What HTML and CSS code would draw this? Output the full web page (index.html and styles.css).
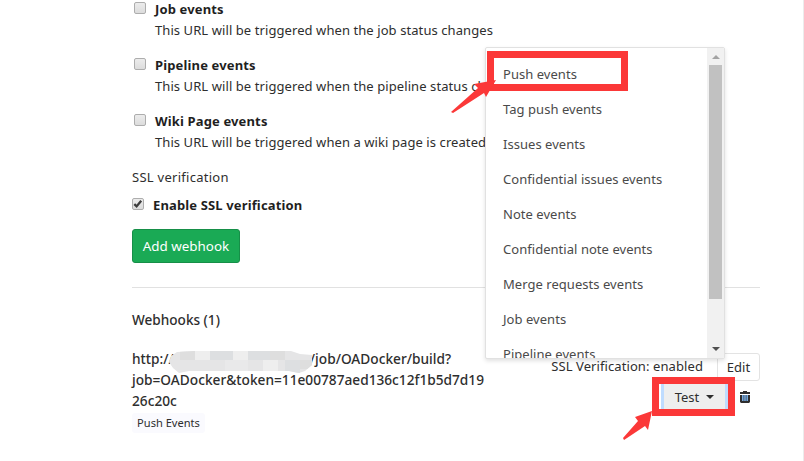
FILE: index.html
```html
<!DOCTYPE html>
<html lang="en">
<head>
<meta charset="utf-8">
<title>Webhooks</title>
<link rel="stylesheet" href="styles.css">
</head>
<body>
<main class="page">
  <section class="triggers">
    <div class="trigger"><span class="box"></span><div><div class="name">Job events</div><div class="desc">This URL will be triggered when the job status changes</div></div></div>
    <div class="trigger"><span class="box"></span><div><div class="name">Pipeline events</div><div class="desc">This URL will be triggered when the pipeline status changes</div></div></div>
    <div class="trigger"><span class="box"></span><div><div class="name">Wiki Page events</div><div class="desc">This URL will be triggered when a wiki page is created</div></div></div>
  </section>
  <div class="ssl-title">SSL verification</div>
  <div class="ssl-check">
    <span class="box"><svg width="12" height="12" viewBox="0 0 12 12"><path d="M2.3 6.2 4.6 8.4 9.2 2.8" fill="none" stroke="#3d3d3d" stroke-width="2.3"/></svg></span>
    <span class="name">Enable SSL verification</span>
  </div>
  <button class="add">Add webhook</button>
  <div class="rule"></div>
  <h5 class="heading">Webhooks (1)</h5>
  <div class="hook">
    <div class="hook-info">
      <div class="url">
        <div class="url-line"><span>http://</span><svg class="mask" width="144" height="22" viewBox="0 0 144 22">
          <clipPath id="blob"><path d="M8 1 26 0H122L131 3 143 4V14L136 20 130 22 120 20H20L10 22 4 17 0 11 2 5Z"/></clipPath>
          <g clip-path="url(#blob)"><path fill="#e5e5e6" d="M0 0h144v22H0z"/><path fill="#dedede" d="M11 0h15v9H11zM131 9h13v9h-13zM101 0h15v9h-15z"/><path fill="#eee" d="M26 0h15v9H26zM64 0h15v9H64zM94 9h15v13H94z"/><path fill="#dddfe1" d="M41 0h23v9H41zM79 0h22v9H79zM116 9h15v13h-15z"/><path fill="#e9e9ea" d="M56 9h23v13H56z"/></g>
        </svg><span class="url-end">/job/OADocker/build?</span></div>
        <div class="url-2">job=OADocker&amp;token=11e00787aed136c12f1b5d7d19</div>
        <div>26c20c</div>
      </div>
      <span class="badge">Push Events</span>
    </div>
    <div class="hook-actions">
      <div class="action-row"><span class="status">SSL Verification: enabled</span><button class="edit">Edit</button></div>
      <div class="action-row second">
        <button class="test"><span>Test</span><i class="caret"></i></button>
        <svg class="trash" width="10" height="12" viewBox="0 0 10 12"><path fill="#2e2e2e" fill-rule="evenodd" d="M3 0h4v1h3v2H0V1h3zM0 4h10v7l-1 1H1l-1-1z"/><path fill="#75a9df" d="M2 4h1.6v6H2zM4.2 4h1.6v6H4.2zM6.4 4H8v6H6.4z"/></svg>
      </div>
    </div>
  </div>
</main>
<div class="menu">
  <ul class="items">
    <li>Push events</li><li>Tag push events</li><li>Issues events</li><li>Confidential issues events</li><li>Note events</li><li>Confidential note events</li><li>Merge requests events</li><li>Job events</li><li>Pipeline events</li>
  </ul>
  <div class="scroll"><i class="up"></i><i class="thumb"></i><i class="down"></i></div>
</div>
<svg class="marks" width="804" height="461" viewBox="0 0 804 461">
  <g fill="none" stroke="#fb3838" stroke-width="7"><path d="M490.5 54.5h134v33h-134z"/><path d="M655.5 380.5h76v32h-76z"/></g>
  <path fill="#fb3838" d="M496 80 474 84 478 88 451 112 453 113 484 93 486 97ZM652 411 635 417 638 421 623 438 624 440 645 426 648 430Z"/>
</svg>
</body>
</html>
```
FILE: styles.css
```css
* { box-sizing: border-box; }
body { margin: 0; width: 804px; height: 461px; overflow: hidden; position: relative; background: #fff; color: #2e2e2e; font: 14px/21px "Noto Sans", sans-serif; }
button { font: inherit; margin: 0; }
.page { height: 461px; padding: 0 43px 0 132px; border-right: 1px solid #ececec; }
.trigger { display: flex; gap: 9px; height: 56px; }
.box { flex: none; width: 12px; height: 12px; border: 1px solid #adadad; border-radius: 2px; background: linear-gradient(#ececec, #dcdcdc); }
.box svg { display: block; margin: -1px; }
.trigger .box { margin: 2px 0 0 2px; }
.trigger > div { margin-top: -1px; }
.name { font-weight: 700; font-size: 13px; letter-spacing: .14px; color: #1f1f1f; white-space: nowrap; }
.desc { font-size: 13px; letter-spacing: .08px; white-space: nowrap; }
.ssl-title { margin-top: -1px; line-height: 21px; font-size: 13px; letter-spacing: .27px; }
.ssl-check { display: flex; gap: 9px; margin-top: 5px; height: 22px; }
.ssl-check .box { margin-top: 5px; }
.ssl-check .name { line-height: 24px; }
.add { display: block; width: 108px; height: 34px; margin-top: 14px; padding: 0; border: 1px solid #168f48; border-radius: 3px; background: #1aaa55; color: #fff; font-size: 13.4px; }
.rule { margin-top: 24px; height: 1px; background: #e1e1e1; }
.heading { margin: 21px 0 0; font-size: 13.6px; font-weight: 500; line-height: 21px; }
.hook { display: flex; justify-content: space-between; margin-top: 19px; }
.hook-info { width: 356px; }
.url { margin-top: -1px; font-size: 13.7px; font-weight: 500; white-space: nowrap; }
.url-line { display: flex; height: 21px; }
.mask { flex: none; margin: 3px -3px 0 -5px; position: relative; }
.badge { display: block; width: 73px; height: 20px; margin-top: 2px; border-radius: 3px; background: #fafafe; font-size: 11.1px; line-height: 20px; text-align: center; white-space: nowrap; }
.hook-actions { padding-top: 4px; }
.action-row { display: flex; justify-content: flex-end; white-space: nowrap; font-size: 13px; }
.status { line-height: 27px; margin-right: 14px; letter-spacing: .09px; }
.edit { width: 43px; height: 28px; padding: 0; border: 1px solid #e3e3e3; border-radius: 3px; background: #fff; color: #2e2e2e; }
.second { margin-top: 2px; padding-right: 10px; }
.test { display: flex; align-items: center; justify-content: center; gap: 7px; width: 67px; height: 28px; padding: 0; border: solid #bfdcff; border-width: 0 3px; background: #eee; color: #2e2e2e; }
.caret { width: 0; height: 0; border: 4px solid transparent; border-top-color: #2e2e2e; border-bottom: 0; }
.trash { margin: 8px 0 0 12px; }
.menu { position: absolute; left: 485px; top: 47px; width: 240px; height: 312px; display: flex; overflow: hidden; border: 1px solid #e1e1e1; border-radius: 2px; background: #fff; box-shadow: 0 2px 4px rgba(0,0,0,.12); }
.items { flex: 1; margin: 0; padding: 9px 0 0 17px; list-style: none; color: #4a4a4a; font-size: 13px; letter-spacing: .04px; }
.items li { height: 35px; line-height: 35px; white-space: nowrap; }
.scroll { width: 17px; display: flex; flex-direction: column; align-items: center; background: #f1f1f1; }
.up { margin: 7px 0 6px; border: 4px solid transparent; border-top: 0; border-bottom-color: #a3a3a3; }
.thumb { width: 13px; height: 234px; background: #c1c1c1; }
.down { margin-top: 48px; border: 4px solid transparent; border-bottom: 0; border-top-color: #505050; }
.marks { position: absolute; left: 0; top: 0; }
```
